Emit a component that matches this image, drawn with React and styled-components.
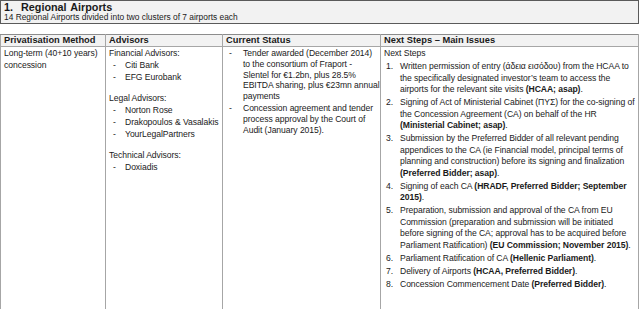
import React from 'react'
import styled, { createGlobalStyle } from 'styled-components'

const GlobalStyle = createGlobalStyle`
  body {
    margin: 0;
    background: #ffffff;
    font-family: 'Liberation Sans', Arial, sans-serif;
    color: #1a1a1a;
  }
`

const Page = styled.div`
  width: 639px;
  height: 309px;
  overflow: hidden;
`

const TitleBox = styled.div`
  background: #f2f2f2;
  border: 1px solid #5a5a5a;
  padding: 1px 3px 2px 3px;
  height: 19px;
`

const Title = styled.h1`
  margin: 0;
  font-size: 10.8px;
  line-height: 11px;
  font-weight: 700;
  word-spacing: 1px;
`

const Subtitle = styled.div`
  font-size: 8.4px;
  line-height: 9px;
`

const Table = styled.table`
  margin-top: 10px;
  width: 100%;
  border-collapse: collapse;
  table-layout: fixed;
  font-size: 8.6px;
  letter-spacing: -0.06px;
  line-height: 11.5px;
`

const HeadCell = styled.th`
  box-sizing: border-box;
  background: #f2f2f2;
  border: 1px solid #a6a6a6;
  border-top-color: #8c8c8c;
  font-size: 9.3px;
  letter-spacing: 0;
  line-height: 11px;
  font-weight: 700;
  text-align: left;
  padding: 0 3px;
  width: ${({ $w }) => ($w ? $w + 'px' : 'auto')};
`

const Cell = styled.td`
  border: 1px solid #a6a6a6;
  border-bottom: none;
  vertical-align: top;
  padding: 1px 3px 40px 3px;
  white-space: nowrap;
  overflow: hidden;
`

const Group = styled.div`
  margin-bottom: 9px;
`

const DashList = styled.ul`
  list-style: none;
  margin: 0;
  padding: 0;
  line-height: ${({ $lh }) => $lh || '11.5px'};
`

const DashItem = styled.li`
  display: flex;
  margin-top: ${({ $gap }) => ($gap ? $gap + 'px' : '0')};
  &::before {
    content: '-';
    flex: 0 0 ${({ $indent }) => $indent}px;
    padding-left: ${({ $lead }) => $lead}px;
    box-sizing: border-box;
  }
`

const NumList = styled.ol`
  list-style: none;
  margin: 0;
  padding: 0;
`

const NumItem = styled.li`
  display: flex;
  margin-top: 1.5px;
`

const Num = styled.span`
  flex: 0 0 16px;
  padding-left: 2px;
  box-sizing: border-box;
`

const advisors = [
  { title: 'Financial Advisors:', names: ['Citi Bank', 'EFG Eurobank'] },
  { title: 'Legal Advisors:', names: ['Norton Rose', 'Drakopoulos & Vasalakis', 'YourLegalPartners'] },
  { title: 'Technical Advisors:', names: ['Doxiadis'] }
]

const status = [
  'Tender awarded (December 2014)\nto the consortium of Fraport -\nSlentel for €1.2bn, plus 28.5%\nEBITDA sharing, plus €23mn annual\npayments',
  'Concession agreement and tender\nprocess approval by the Court of\nAudit (January 2015).'
]

// ** marks bold runs, \n marks the line breaks of the source document
const steps = [
  'Written permission of entry (άδεια εισόδου) from the HCAA to\nthe specifically designated investor’s team to access the\nairports for the relevant site visits **(HCAA; asap)**.',
  'Signing of Act of Ministerial Cabinet (ΠΥΣ) for the co-signing of\nthe Concession Agreement (CA) on behalf of the HR\n**(Ministerial Cabinet; asap)**.',
  'Submission by the Preferred Bidder of all relevant pending\nappendices to the CA (ie Financial model, principal terms of\nplanning and construction) before its signing and finalization\n**(Preferred Bidder; asap)**.',
  'Signing of each CA **(HRADF, Preferred Bidder; September\n2015)**.',
  'Preparation, submission and approval of the CA from EU\nCommission (preparation and submission will be initiated\nbefore signing of the CA; approval has to be acquired before\nParliament Ratification) **(EU Commission; November 2015)**.',
  'Parliament Ratification of CA **(Hellenic Parliament)**.',
  'Delivery of Airports **(HCAA, Preferred Bidder)**.',
  'Concession Commencement Date **(Preferred Bidder)**.'
]

function renderText(text) {
  const out = []
  text.split('**').forEach((part, i) => {
    const lines = part.split('\n')
    lines.forEach((line, j) => {
      if (j > 0) out.push(<br key={i + '-br-' + j} />)
      out.push(i % 2 ? <b key={i + '-' + j}>{line}</b> : <React.Fragment key={i + '-' + j}>{line}</React.Fragment>)
    })
  })
  return out
}

export default function App() {
  return (
    <Page>
      <GlobalStyle />
      <TitleBox>
        <Title>1.&nbsp; Regional Airports</Title>
        <Subtitle>14 Regional Airports divided into two clusters of 7 airports each</Subtitle>
      </TitleBox>
      <Table>
        <thead>
          <tr>
            <HeadCell $w={105}>Privatisation Method</HeadCell>
            <HeadCell $w={117}>Advisors</HeadCell>
            <HeadCell $w={158}>Current Status</HeadCell>
            <HeadCell>Next Steps – Main Issues</HeadCell>
          </tr>
        </thead>
        <tbody>
          <tr>
            <Cell>{renderText('Long-term (40+10 years)\nconcession')}</Cell>
            <Cell>
              {advisors.map(g => (
                <Group key={g.title}>
                  {g.title}
                  <DashList>
                    {g.names.map(n => (
                      <DashItem key={n} $indent={16} $lead={4} $gap={0.7}>{n}</DashItem>
                    ))}
                  </DashList>
                </Group>
              ))}
            </Cell>
            <Cell>
              <DashList $lh="10.8px">
                {status.map((s, i) => (
                  <DashItem key={i} $indent={17} $lead={3} $gap={i ? 1 : 0}>
                    <span>{renderText(s)}</span>
                  </DashItem>
                ))}
              </DashList>
            </Cell>
            <Cell>
              Next Steps
              <NumList>
                {steps.map((s, i) => (
                  <NumItem key={i}>
                    <Num>{i + 1}.</Num>
                    <span>{renderText(s)}</span>
                  </NumItem>
                ))}
              </NumList>
            </Cell>
          </tr>
        </tbody>
      </Table>
    </Page>
  )
}
